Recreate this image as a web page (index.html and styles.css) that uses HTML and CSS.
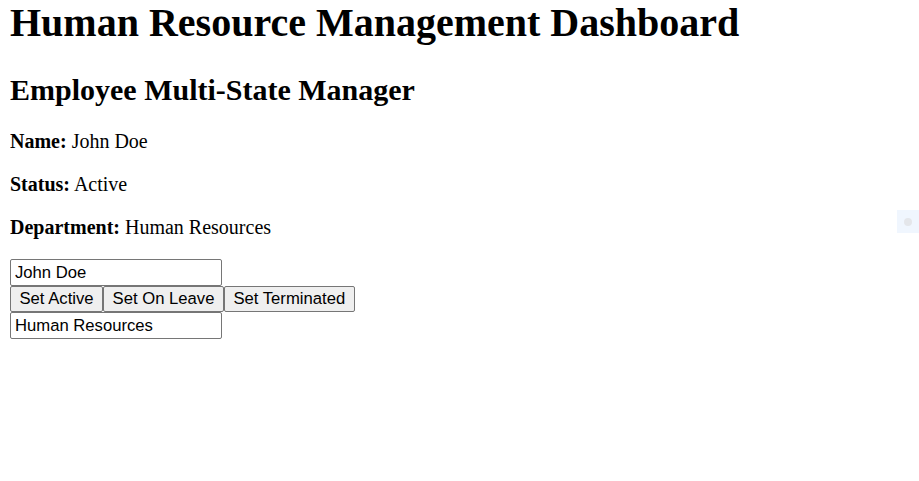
FILE: index.html
```html
<!DOCTYPE html>
<html>
<head>
<meta charset="utf-8">
<title>HR Dashboard</title>
<link rel="stylesheet" href="styles.css">
</head>
<body>
<h1 class="title">Human Resource Management Dashboard</h1>
<div class="manager">
  <h2 class="subtitle">Employee Multi-State Manager</h2>
  <p class="field"><strong>Name:</strong> John Doe</p>
  <p class="field"><strong>Status:</strong> Active</p>
  <p class="field"><strong>Department:</strong> Human Resources</p>
  <div class="controls">
    <input class="text-input" type="text" value="John Doe">
    <div class="buttons"><button class="btn">Set Active</button><button class="btn">Set On Leave</button><button class="btn">Set Terminated</button></div>
    <input class="text-input" type="text" value="Human Resources">
  </div>
</div>
<div class="side-widget"><span class="side-dot"></span></div>
</body>
</html>
```
FILE: styles.css
```css
html, body {
  background: #fff;
}
body {
  margin: 0 10px;
  font-family: "Liberation Serif", "Times New Roman", serif;
  color: #000;
}
.title {
  font-size: 40px;
  font-weight: bold;
  margin: 0 0 26.8px;
  line-height: 46px;
}
.subtitle {
  font-size: 30px;
  font-weight: bold;
  margin: 0 0 23px;
  line-height: 34.5px;
}
.field {
  font-size: 20px;
  line-height: 23px;
  margin: 20px 0;
}
.subtitle + .field {
  margin-top: 0;
}
.controls {
  display: flex;
  flex-direction: column;
  align-items: flex-start;
}
.buttons {
  display: flex;
}
.text-input {
  box-sizing: border-box;
  width: 212px;
  height: 26.5px;
  margin: 0;
  padding: 0 4px;
  border: 1px solid #767676;
  border-radius: 2px;
  font-family: "Liberation Sans", Arial, sans-serif;
  font-size: 16.67px;
  color: #000;
  background: #fff;
}
.btn {
  box-sizing: border-box;
  height: 26.5px;
  margin: 0;
  padding: 0 8.5px;
  border: 1px solid #767676;
  border-radius: 2px;
  background: #efefef;
  font-family: "Liberation Sans", Arial, sans-serif;
  font-size: 16.67px;
  color: #000;
}
.side-widget {
  position: absolute;
  left: 897px;
  top: 210px;
  width: 22px;
  height: 23px;
  background: #f0f6fe;
  display: flex;
  align-items: center;
  justify-content: center;
}
.side-dot {
  width: 8px;
  height: 8px;
  border-radius: 50%;
  background: #e4e6ea;
}
```
